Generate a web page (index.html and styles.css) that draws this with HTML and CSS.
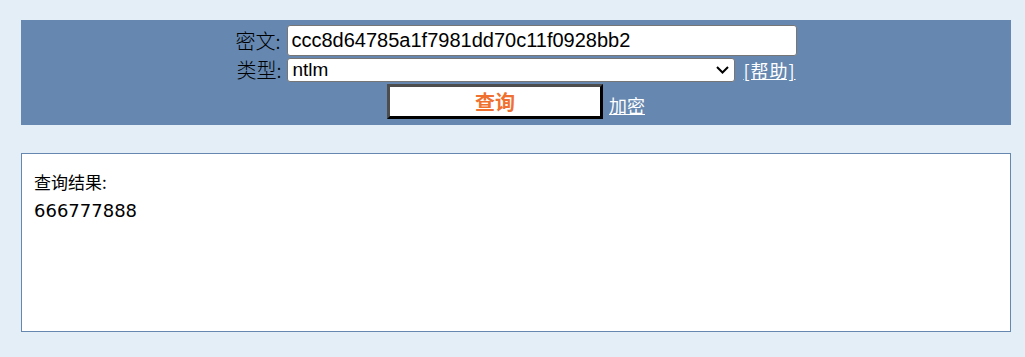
FILE: index.html
```html
<!DOCTYPE html>
<html lang="zh-CN">
<head>
<meta charset="utf-8">
<title>查询</title>
<link rel="stylesheet" href="styles.css">
</head>
<body>
<div class="page">
  <form class="top">
    <div class="row">
      <label class="lbl">密文:</label>
      <input class="cipher" type="text" value="ccc8d64785a1f7981dd70c11f0928bb2">
    </div>
    <div class="row">
      <label class="lbl">类型:</label>
      <span class="sel-wrap">
        <select class="type"><option>ntlm</option></select>
        <svg class="chev" width="13" height="8" viewBox="0 0 13 8"><path d="M1 1 L6.5 6.5 L12 1" fill="none" stroke="#000" stroke-width="2"/></svg>
      </span>
      <a class="help" href="#">[帮助]</a>
    </div>
    <div class="row">
      <button class="go" type="button">查询</button>
      <a class="enc" href="#">加密</a>
    </div>
  </form>
  <div class="result">
    <div class="res-title">查询结果:</div>
    <div class="res-value">666777888</div>
  </div>
</div>
</body>
</html>
```

FILE: styles.css
```css
html, body {
  margin: 0;
  padding: 0;
  background: #e3eef6;
}
body {
  font-family: "Noto Sans CJK SC", "Liberation Sans", sans-serif;
  color: #000;
}
.page {
  margin: 20px 0 0 21px;
  width: 990px;
}
.top {
  background: #6688b0;
  padding: 5px 0 6px;
  margin: 0;
  display: flex;
  flex-direction: column;
  gap: 2px;
}
.row {
  display: flex;
  justify-content: center;
  align-items: center;
}
.lbl {
  font-size: 20px;
  font-weight: 300;
  line-height: 24px;
  margin-right: 6px;
  color: #000;
}
.cipher {
  box-sizing: border-box;
  width: 510px;
  height: 31px;
  margin: 0;
  padding: 0 4px;
  border: 1px solid #767676;
  border-radius: 3px;
  background: #fff;
  font-family: "Liberation Sans", Arial, sans-serif;
  font-size: 20px;
  color: #000;
}
.sel-wrap {
  position: relative;
  display: block;
  height: 24px;
}
.type {
  box-sizing: border-box;
  -webkit-appearance: none;
  appearance: none;
  display: block;
  width: 448px;
  height: 24px;
  margin: 0;
  padding: 0 4px;
  border: 1px solid #767676;
  border-radius: 3px;
  background: #fff;
  font-family: "Liberation Sans", Arial, sans-serif;
  font-size: 19px;
  line-height: 22px;
  color: #000;
}
.chev {
  position: absolute;
  right: 6px;
  top: 8px;
  pointer-events: none;
}
.help {
  font-size: 18px;
  line-height: 24px;
  letter-spacing: 1px;
  color: #fff;
  text-decoration: underline;
  margin-left: 8px;
}
.go {
  box-sizing: border-box;
  width: 216px;
  height: 35px;
  margin: 0;
  padding: 0;
  background: #fff;
  border-style: solid;
  border-width: 3px;
  border-color: #4d4d4d #000 #000 #4d4d4d;
  color: #f07030;
  font-family: "Noto Sans CJK SC", sans-serif;
  font-size: 20px;
  font-weight: bold;
  line-height: 1;
}
.enc {
  font-size: 18px;
  color: #fff;
  text-decoration: underline;
  margin-left: 6px;
  align-self: flex-end;
  line-height: 28px;
}
.result {
  box-sizing: border-box;
  margin-top: 28px;
  height: 179px;
  background: #fff;
  border: 1px solid #6688b0;
  padding: 14px 12px;
}
.res-title {
  font-size: 17px;
  line-height: 28px;
}
.res-value {
  font-family: "DejaVu Sans", Verdana, sans-serif;
  font-size: 18px;
  line-height: 30px;
}
```
